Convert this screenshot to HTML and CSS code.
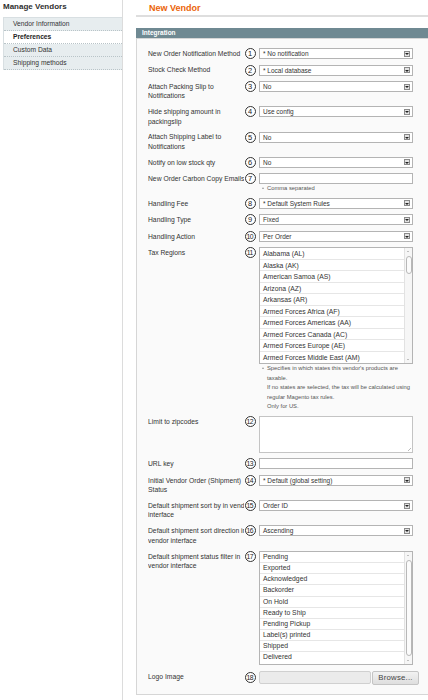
FILE: index.html
```html
<!DOCTYPE html>
<html>
<head>
<meta charset="utf-8">
<link rel="stylesheet" href="styles.css">
</head>
<body>
<div class="page">
  <aside class="sidebar">
    <h3 class="side-title">Manage Vendors</h3>
    <ul class="tabs">
      <li class="tab">Vendor Information</li>
      <li class="tab active">Preferences</li>
      <li class="tab">Custom Data</li>
      <li class="tab">Shipping methods</li>
    </ul>
  </aside>
  <main class="main">
    <div class="content-header"><h2 class="title">New Vendor</h2></div>
    <div class="section-head">Integration</div>
    <div class="fieldset">
      <div class="row">
        <div class="label">New Order Notification Method</div><span class="num">1</span>
        <div class="select">* No notification<span class="arrow"></span></div>
      </div>
      <div class="row">
        <div class="label">Stock Check Method</div><span class="num">2</span>
        <div class="select">* Local database<span class="arrow"></span></div>
      </div>
      <div class="row">
        <div class="label">Attach Packing Slip to<br>Notifications</div><span class="num">3</span>
        <div class="select">No<span class="arrow"></span></div>
      </div>
      <div class="row">
        <div class="label">Hide shipping amount in<br>packingslip</div><span class="num">4</span>
        <div class="select">Use config<span class="arrow"></span></div>
      </div>
      <div class="row">
        <div class="label">Attach Shipping Label to<br>Notifications</div><span class="num">5</span>
        <div class="select">No<span class="arrow"></span></div>
      </div>
      <div class="row">
        <div class="label">Notify on low stock qty</div><span class="num">6</span>
        <div class="select">No<span class="arrow"></span></div>
      </div>
      <div class="row">
        <div class="label">New Order Carbon Copy Emails</div><span class="num">7</span>
        <div class="value">
          <div class="input"></div>
          <div class="note note-one"><span class="tri"></span>Comma separated</div>
        </div>
      </div>
      <div class="row">
        <div class="label">Handling Fee</div><span class="num">8</span>
        <div class="select">* Default System Rules<span class="arrow"></span></div>
      </div>
      <div class="row">
        <div class="label">Handling Type</div><span class="num">9</span>
        <div class="select">Fixed<span class="arrow"></span></div>
      </div>
      <div class="row">
        <div class="label">Handling Action</div><span class="num two">10</span>
        <div class="select">Per Order<span class="arrow"></span></div>
      </div>
      <div class="row row-tax">
        <div class="label">Tax Regions</div><span class="num two">11</span>
        <div class="value">
          <div class="multi multi-tax">
            <ul class="opts">
              <li>Alabama (AL)</li>
              <li>Alaska (AK)</li>
              <li>American Samoa (AS)</li>
              <li>Arizona (AZ)</li>
              <li>Arkansas (AR)</li>
              <li>Armed Forces Africa (AF)</li>
              <li>Armed Forces Americas (AA)</li>
              <li>Armed Forces Canada (AC)</li>
              <li>Armed Forces Europe (AE)</li>
              <li>Armed Forces Middle East (AM)</li>
            </ul>
            <div class="sbar">
              <span class="sb-up"></span>
              <span class="sb-track"><span class="sb-thumb thumb-small"></span></span>
              <span class="sb-down"></span>
            </div>
          </div>
          <div class="note note-multi">
            <span class="tri"></span>Specifies in which states this vendor's products are<br>
            taxable.<br>
            If no states are selected, the tax will be calculated using<br>
            regular Magento tax rules.<br>
            Only for US.
          </div>
        </div>
      </div>
      <div class="row">
        <div class="label">Limit to zipcodes</div><span class="num two">12</span>
        <div class="textarea"><span class="grip"></span></div>
      </div>
      <div class="row">
        <div class="label">URL key</div><span class="num two">13</span>
        <div class="input"></div>
      </div>
      <div class="row">
        <div class="label">Initial Vendor Order (Shipment)<br>Status</div><span class="num two">14</span>
        <div class="select">* Default (global setting)<span class="arrow"></span></div>
      </div>
      <div class="row">
        <div class="label">Default shipment sort by in vendor<br>interface</div><span class="num two">15</span>
        <div class="select">Order ID<span class="arrow"></span></div>
      </div>
      <div class="row">
        <div class="label">Default shipment sort direction in<br>vendor interface</div><span class="num two">16</span>
        <div class="select">Ascending<span class="arrow"></span></div>
      </div>
      <div class="row row-status">
        <div class="label">Default shipment status filter in<br>vendor interface</div><span class="num two">17</span>
        <div class="multi multi-status">
          <ul class="opts">
            <li>Pending</li>
            <li>Exported</li>
            <li>Acknowledged</li>
            <li>Backorder</li>
            <li>On Hold</li>
            <li>Ready to Ship</li>
            <li>Pending Pickup</li>
            <li>Label(s) printed</li>
            <li>Shipped</li>
            <li>Delivered</li>
          </ul>
          <div class="sbar">
            <span class="sb-up"></span>
            <span class="sb-track"><span class="sb-thumb thumb-big"></span></span>
            <span class="sb-down"></span>
          </div>
        </div>
      </div>
      <div class="row row-file">
        <div class="label">Logo Image</div><span class="num two">18</span>
        <div class="file">
          <div class="file-field"></div>
          <div class="browse">Browse...</div>
        </div>
      </div>
    </div>
  </main>
</div>
</body>
</html>
```

FILE: styles.css
```css
html, body {
  margin: 0;
  padding: 0;
  background: #ffffff;
}
body {
  font-family: "Liberation Sans", Arial, sans-serif;
  color: #303030;
  width: 428px;
  height: 700px;
  overflow: hidden;
}
.page {
  display: flex;
  height: 700px;
}
.sidebar {
  width: 119px;
  padding-left: 3px;
  border-right: 1px solid #dcdcdc;
  flex: none;
}
.side-title {
  margin: 0;
  padding-top: 2px;
  height: 15px;
  font-size: 8px;
  line-height: 10px;
  font-weight: bold;
  color: #2e2e2e;
}
.tabs {
  list-style: none;
  margin: 0;
  padding: 0;
  border-top: 1px solid #d8dfe2;
  border-left: 1px solid #d8dfe2;
}
.tab {
  height: 12px;
  line-height: 12px;
  font-size: 6.7px;
  padding-left: 9px;
  background: #e7edef;
  color: #333;
  border-bottom: 1px dotted #b9c4c8;
}
.tab.active {
  background: #ffffff;
  font-weight: bold;
  color: #222;
}
.main {
  flex: 1;
  padding-left: 13px;
  overflow: hidden;
}
.content-header {
  height: 15px;
  border-bottom: 2px solid #dedede;
  margin-bottom: 11px;
  width: 320px;
}
.title {
  margin: 0;
  padding-left: 13px;
  padding-top: 3px;
  font-size: 9px;
  line-height: 11px;
  font-weight: bold;
  color: #eb6309;
}
.section-head {
  height: 10px;
  line-height: 10px;
  background: #6f8992;
  color: #ffffff;
  font-size: 6.5px;
  font-weight: bold;
  padding-left: 6px;
  width: 320px;
}
.fieldset {
  background: #fafafa;
  border: 1px solid #d6d6d6;
  width: 320px;
  padding: 6px 0 6px 11px;
}
.row {
  display: flex;
  align-items: flex-start;
  position: relative;
  padding: 3px 0 2.5px;
}
.label {
  width: 96px;
  margin-right: 15px;
  flex: none;
  overflow: hidden;
  white-space: nowrap;
  font-size: 6.75px;
  line-height: 9.5px;
  padding-top: 0.8px;
  color: #333;
}
.num {
  position: absolute;
  left: 96.5px;
  top: 3px;
  width: 11px;
  height: 11px;
  box-sizing: border-box;
  border: 1px solid #333;
  border-radius: 50%;
  background: #ffffff;
  font-size: 7.5px;
  line-height: 9px;
  text-align: center;
  color: #222;
}
.num.two {
  font-size: 6.8px;
  letter-spacing: -0.6px;
  text-indent: -0.6px;
}
.select, .input {
  width: 154px;
  height: 11px;
  box-sizing: border-box;
  background: #ffffff;
  border: 1px solid #b4b4b4;
  position: relative;
  font-size: 6.5px;
  line-height: 9px;
  padding-left: 3px;
  color: #333;
}
.arrow {
  position: absolute;
  right: 2px;
  top: 1.5px;
  width: 6px;
  height: 6px;
  box-sizing: border-box;
  border: 1px solid #8a8a8a;
  background: #e2e2e2;
}
.arrow::after {
  content: "";
  position: absolute;
  left: 0;
  top: 1.5px;
  border-left: 2px solid transparent;
  border-right: 2px solid transparent;
  border-top: 2px solid #222;
}
.value {
  display: flex;
  flex-direction: column;
  width: 154px;
}
.note {
  font-size: 5.8px;
  color: #555;
  padding-left: 8px;
  position: relative;
  white-space: nowrap;
}
.note-one {
  line-height: 8px;
}
.note-multi {
  line-height: 9.5px;
}
.tri {
  position: absolute;
  left: 3px;
  top: 3px;
  border-left: 1.5px solid transparent;
  border-right: 1.5px solid transparent;
  border-bottom: 2px solid #9a9a9a;
}
.row-tax {
  padding-bottom: 1px;
}
.multi {
  width: 154px;
  box-sizing: border-box;
  border: 1px solid #b4b4b4;
  background: #ffffff;
  display: flex;
  position: relative;
}
.multi-tax {
  height: 117px;
}
.multi-status {
  height: 114px;
}
.row-status {
  padding-bottom: 3.5px;
}
.opts {
  list-style: none;
  margin: 0;
  padding: 0;
  flex: 1;
}
.opts li {
  font-size: 6.8px;
  padding-left: 3px;
  color: #333;
  border-bottom: 1px solid #e6e6e6;
}
.multi-tax .opts li {
  height: 10.5px;
  line-height: 11px;
}
.multi-status .opts li {
  height: 10.2px;
  line-height: 10.6px;
}
.opts li:last-child {
  border-bottom: none;
}
.sbar {
  width: 7px;
  flex: none;
  display: flex;
  flex-direction: column;
  background: #f6f6f6;
  border-left: 1px solid #e2e2e2;
}
.sb-up, .sb-down {
  height: 7px;
  position: relative;
}
.sb-up::after, .sb-down::after {
  content: "";
  position: absolute;
  left: 2px;
  top: 3px;
  border-left: 1.5px solid transparent;
  border-right: 1.5px solid transparent;
}
.sb-up::after {
  border-bottom: 1.5px solid #888;
}
.sb-down::after {
  border-top: 1.5px solid #888;
}
.sb-track {
  flex: 1;
  position: relative;
}
.sb-thumb {
  position: absolute;
  left: 0.5px;
  right: 0.5px;
  top: 1px;
  border: 1px solid #b8b8b8;
  border-radius: 3px;
  background: #fbfbfb;
}
.thumb-small {
  height: 16px;
}
.thumb-big {
  bottom: 1px;
}
.textarea {
  width: 154px;
  height: 37px;
  box-sizing: border-box;
  background: #ffffff;
  border: 1px solid #c4c4c4;
  position: relative;
}
.grip {
  position: absolute;
  right: 1px;
  bottom: 1px;
  width: 3px;
  height: 3px;
  background: linear-gradient(135deg, transparent 45%, #bbb 45%, #bbb 60%, transparent 60%);
}
.row-file {
  padding-top: 3px;
}
.row-file .num {
  top: 4px;
}
.file {
  display: flex;
  gap: 1px;
  width: 161px;
}
.file-field {
  width: 112px;
  height: 13px;
  box-sizing: border-box;
  background: #ebebeb;
  border: 1px solid #d0d0d0;
  border-radius: 2px;
}
.browse {
  width: 47px;
  height: 14px;
  box-sizing: border-box;
  background: linear-gradient(#f2f2f2, #dedede);
  border: 1px solid #c4c4c4;
  border-radius: 2px;
  font-size: 7.8px;
  line-height: 12px;
  text-align: center;
  color: #444;
  letter-spacing: 0.2px;
}
```
